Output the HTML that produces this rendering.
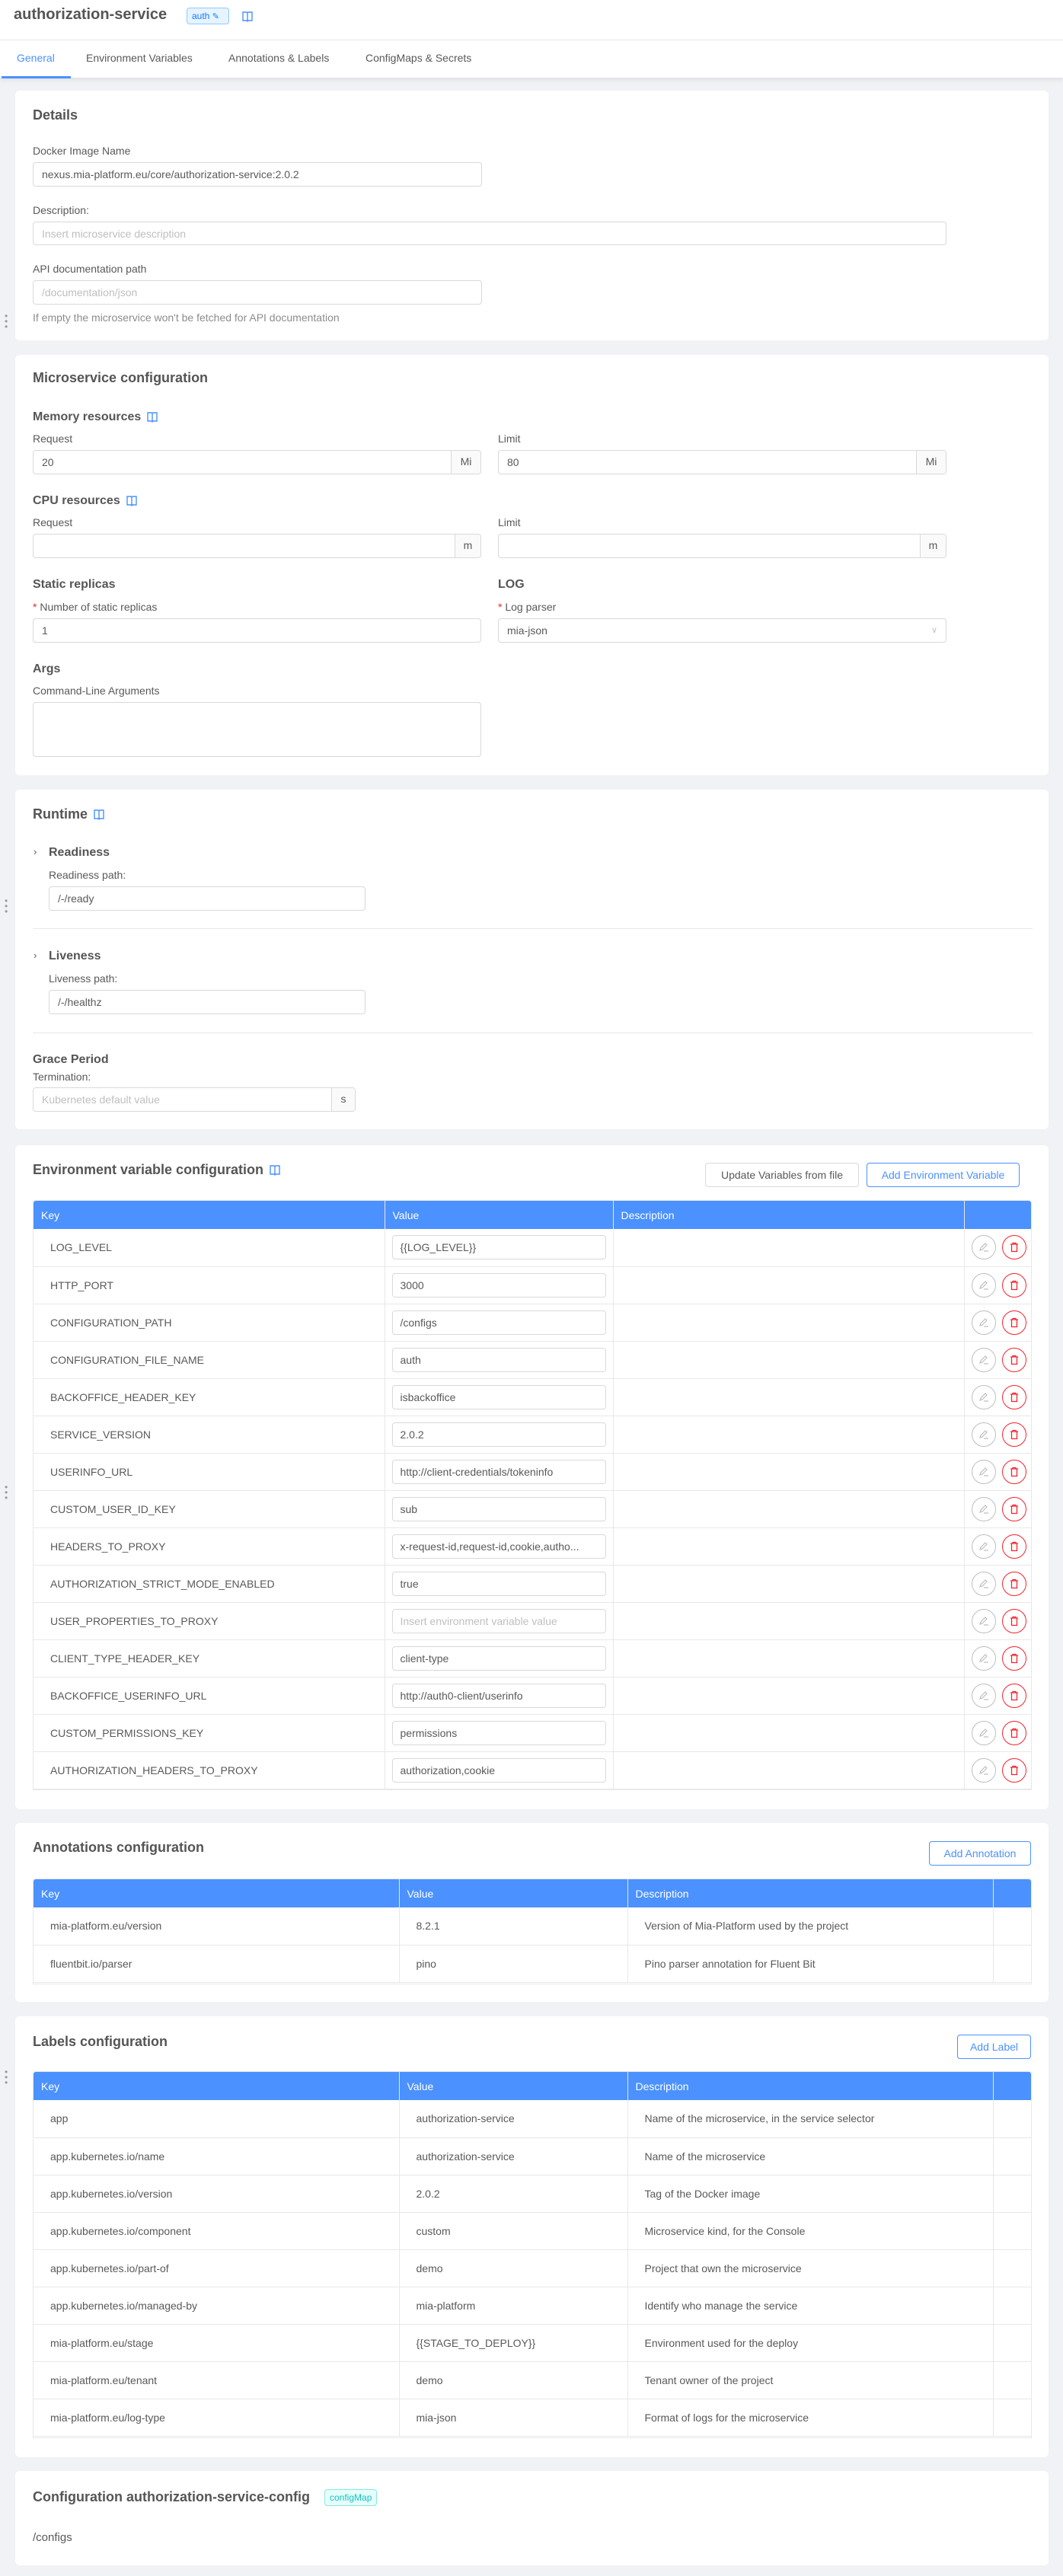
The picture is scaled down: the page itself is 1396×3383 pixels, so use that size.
<!DOCTYPE html>
<html><head><meta charset="utf-8"><style>
*{box-sizing:border-box;margin:0;padding:0}
body{width:1396px;height:3383px;background:#f0f2f5;font-family:"Liberation Sans",sans-serif;color:#595959;font-size:14px;position:relative;overflow:hidden}
.a{position:absolute}
.card{position:absolute;left:20px;width:1357px;background:#fff;border-radius:6px}
.h{position:absolute;font-size:18px;font-weight:bold;color:#555;white-space:nowrap}
.h2{position:absolute;font-size:16px;font-weight:bold;color:#555}
.lbl{position:absolute;font-size:14px;color:#595959;white-space:nowrap}
.inp{position:absolute;height:32px;border:1px solid #d9d9d9;border-radius:4px;background:#fff;padding:0 11px;line-height:30px;font-size:14px;color:#595959;white-space:nowrap;overflow:hidden}
.ph{color:#bfbfbf}
.add{position:absolute;right:0;top:-1px;bottom:-1px;border-left:1px solid #d9d9d9;background:#fafafa;width:34px;text-align:center;line-height:30px;border-radius:0 4px 4px 0}
.btn{position:absolute;height:32px;border:1px solid #d9d9d9;border-radius:4px;background:#fff;line-height:30px;text-align:center;font-size:14px}
.btnp{border-color:#4b91ff;color:#4b91ff}
table{position:absolute;border-collapse:collapse;table-layout:fixed;font-size:14px}
th{background:#4b91ff;color:#fff;font-weight:normal;text-align:left;height:37px;padding:0 10px;border-right:1px solid #e8e8e8}
td{height:49px;border-bottom:1px solid #e8e8e8;border-right:1px solid #e8e8e8;padding:0 22px;white-space:nowrap;color:#595959}
.tbl{border:1px solid #e8e8e8;border-radius:4px 4px 0 0;overflow:hidden}
.star{color:#f5222d}
.drag{position:absolute;left:6px;width:3px;color:#999;font-size:12px;line-height:7px}
.book{display:inline-block;vertical-align:middle;margin-left:8px}
.circ{display:inline-block;width:32px;height:32px;border-radius:50%;border:1px solid #bfbfbf;vertical-align:middle;position:relative}
.circ.r{border-color:#f5222d;margin-left:8px}
.circ svg{position:absolute;left:8px;top:8px}
</style></head><body>

<!-- header -->
<div class="a" style="left:0;top:0;width:1396px;height:53px;background:#fff;border-bottom:1px solid #e8e8e8"></div>
<div class="a" style="left:18px;top:8px;font-size:20px;font-weight:bold;color:#555">authorization-service</div>
<div class="a" style="left:245px;top:10px;width:56px;height:22px;border:1px solid #91caff;background:#e6f4ff;border-radius:4px;color:#1677ff;font-size:12px;line-height:20px;padding-left:6px">auth <span style="font-size:11px">✎</span></div>
<svg class="a" style="left:318px;top:14px" width="14" height="16" viewBox="0 0 14 16"><path d="M1 2h5l1 1 1-1h5v11H8l-1 1-1-1H1z M7 3v11" fill="none" stroke="#4b91ff" stroke-width="1.4"/></svg>
<div class="a" style="left:0;top:53px;width:1396px;height:49px;background:#fff;box-shadow:0 3px 6px rgba(0,0,0,.08)"></div>
<div class="a" style="left:22px;top:68px;font-size:14px;color:#4b91ff">General</div>
<div class="a" style="left:113px;top:68px;font-size:14px">Environment Variables</div>
<div class="a" style="left:300px;top:68px;font-size:14px">Annotations &amp; Labels</div>
<div class="a" style="left:480px;top:68px;font-size:14px">ConfigMaps &amp; Secrets</div>
<div class="a" style="left:2px;top:100px;width:91px;height:3px;background:#4b91ff"></div>

<!-- Details -->
<div class="card" style="top:119px;height:328px"></div>
<div class="h" style="left:43px;top:141px">Details</div>
<div class="lbl" style="left:43px;top:190px">Docker Image Name</div>
<div class="inp" style="left:43px;top:213px;width:590px">nexus.mia-platform.eu/core/authorization-service:2.0.2</div>
<div class="lbl" style="left:43px;top:268px">Description:</div>
<div class="inp" style="left:43px;top:291px;width:1200px;height:31px"><span class="ph">Insert microservice description</span></div>
<div class="lbl" style="left:43px;top:345px">API documentation path</div>
<div class="inp" style="left:43px;top:368px;width:590px"><span class="ph">/documentation/json</span></div>
<div class="lbl" style="left:43px;top:409px;color:#8c8c8c">If empty the microservice won't be fetched for API documentation</div>
<div class="drag" style="top:412px">•<br>•<br>•</div>

<!-- Microservice configuration -->
<div class="card" style="top:466px;height:552px"></div>
<div class="h" style="left:43px;top:486px">Microservice configuration</div>
<div class="h2" style="left:43px;top:539px">Memory resources<svg class="book" width="14" height="16" viewBox="0 0 14 16"><path d="M1 2h5l1 1 1-1h5v11H8l-1 1-1-1H1z M7 3v11" fill="none" stroke="#4b91ff" stroke-width="1.4"/></svg></div>
<div class="lbl" style="left:43px;top:568px">Request</div>
<div class="lbl" style="left:654px;top:568px">Limit</div>
<div class="inp" style="left:43px;top:591px;width:589px">20<div class="add" style="width:39px">Mi</div></div>
<div class="inp" style="left:654px;top:591px;width:589px">80<div class="add" style="width:39px">Mi</div></div>
<div class="h2" style="left:43px;top:649px">CPU resources<svg class="book" width="14" height="16" viewBox="0 0 14 16"><path d="M1 2h5l1 1 1-1h5v11H8l-1 1-1-1H1z M7 3v11" fill="none" stroke="#4b91ff" stroke-width="1.4"/></svg></div>
<div class="lbl" style="left:43px;top:678px">Request</div>
<div class="lbl" style="left:654px;top:678px">Limit</div>
<div class="inp" style="left:43px;top:701px;width:589px"><div class="add">m</div></div>
<div class="inp" style="left:654px;top:701px;width:589px"><div class="add">m</div></div>
<div class="h2" style="left:43px;top:759px">Static replicas</div>
<div class="h2" style="left:654px;top:759px">LOG</div>
<div class="lbl" style="left:43px;top:789px"><span class="star">* </span>Number of static replicas</div>
<div class="lbl" style="left:654px;top:789px"><span class="star">* </span>Log parser</div>
<div class="inp" style="left:43px;top:812px;width:589px">1</div>
<div class="inp" style="left:654px;top:812px;width:589px">mia-json<span style="position:absolute;right:11px;color:#bfbfbf;font-size:11px">∨</span></div>
<div class="h2" style="left:43px;top:870px">Args</div>
<div class="lbl" style="left:43px;top:899px">Command-Line Arguments</div>
<div class="inp" style="left:43px;top:922px;width:589px;height:72px"></div>

<!-- Runtime -->
<div class="card" style="top:1037px;height:446px"></div>
<div class="h" style="left:43px;top:1059px">Runtime<svg class="book" width="14" height="16" viewBox="0 0 14 16"><path d="M1 2h5l1 1 1-1h5v11H8l-1 1-1-1H1z M7 3v11" fill="none" stroke="#4b91ff" stroke-width="1.4"/></svg></div>
<div class="a" style="left:44px;top:1111px;font-size:13px">›</div>
<div class="h2" style="left:64px;top:1111px">Readiness</div>
<div class="lbl" style="left:64px;top:1141px">Readiness path:</div>
<div class="inp" style="left:64px;top:1164px;width:416px">/-/ready</div>
<div class="a" style="left:43px;top:1219px;width:1313px;height:1px;background:#e8e8e8"></div>
<div class="a" style="left:44px;top:1247px;font-size:13px">›</div>
<div class="h2" style="left:64px;top:1247px">Liveness</div>
<div class="lbl" style="left:64px;top:1277px">Liveness path:</div>
<div class="inp" style="left:64px;top:1300px;width:416px">/-/healthz</div>
<div class="a" style="left:43px;top:1356px;width:1313px;height:1px;background:#e8e8e8"></div>
<div class="h2" style="left:43px;top:1383px">Grace Period</div>
<div class="lbl" style="left:43px;top:1406px">Termination:</div>
<div class="inp" style="left:43px;top:1428px;width:424px"><span class="ph">Kubernetes default value</span><div class="add" style="width:31px">s</div></div>
<div class="drag" style="top:1180px">•<br>•<br>•</div>

<!-- Env -->
<div class="card" style="top:1504px;height:872px"></div>
<div class="h" style="left:43px;top:1526px">Environment variable configuration<svg class="book" width="14" height="16" viewBox="0 0 14 16"><path d="M1 2h5l1 1 1-1h5v11H8l-1 1-1-1H1z M7 3v11" fill="none" stroke="#4b91ff" stroke-width="1.4"/></svg></div>
<div class="btn" style="left:926px;top:1527px;width:202px">Update Variables from file</div>
<div class="btn btnp" style="left:1138px;top:1527px;width:201px">Add Environment Variable</div>
<div class="tbl a" style="left:43px;top:1576px;width:1312px;height:775px">
<table style="left:0;top:0;width:1312px">
<colgroup><col style="width:461px"><col style="width:300px"><col style="width:461px"><col style="width:90px"></colgroup>
<tr><th>Key</th><th>Value</th><th>Description</th><th></th></tr>
<tbody id="env"></tbody>
</table></div>
<div class="drag" style="top:1950px">•<br>•<br>•</div>

<!-- Annotations -->
<div class="card" style="top:2394px;height:235px"></div>
<div class="h" style="left:43px;top:2416px">Annotations configuration</div>
<div class="btn btnp" style="left:1220px;top:2418px;width:134px">Add Annotation</div>
<div class="tbl a" style="left:43px;top:2467px;width:1312px;height:139px">
<table style="left:0;top:0;width:1312px">
<colgroup><col style="width:480px"><col style="width:300px"><col style="width:480px"><col style="width:52px"></colgroup>
<tr><th>Key</th><th>Value</th><th>Description</th><th></th></tr>
<tr><td>mia-platform.eu/version</td><td>8.2.1</td><td>Version of Mia-Platform used by the project</td><td></td></tr>
<tr><td>fluentbit.io/parser</td><td>pino</td><td>Pino parser annotation for Fluent Bit</td><td></td></tr>
</table></div>

<!-- Labels -->
<div class="card" style="top:2648px;height:579px"></div>
<div class="h" style="left:43px;top:2671px">Labels configuration</div>
<div class="btn btnp" style="left:1257px;top:2672px;width:97px">Add Label</div>
<div class="tbl a" style="left:43px;top:2720px;width:1312px;height:482px">
<table style="left:0;top:0;width:1312px">
<colgroup><col style="width:480px"><col style="width:300px"><col style="width:480px"><col style="width:52px"></colgroup>
<tr><th>Key</th><th>Value</th><th>Description</th><th></th></tr>
<tr><td>app</td><td>authorization-service</td><td>Name of the microservice, in the service selector</td><td></td></tr>
<tr><td>app.kubernetes.io/name</td><td>authorization-service</td><td>Name of the microservice</td><td></td></tr>
<tr><td>app.kubernetes.io/version</td><td>2.0.2</td><td>Tag of the Docker image</td><td></td></tr>
<tr><td>app.kubernetes.io/component</td><td>custom</td><td>Microservice kind, for the Console</td><td></td></tr>
<tr><td>app.kubernetes.io/part-of</td><td>demo</td><td>Project that own the microservice</td><td></td></tr>
<tr><td>app.kubernetes.io/managed-by</td><td>mia-platform</td><td>Identify who manage the service</td><td></td></tr>
<tr><td>mia-platform.eu/stage</td><td>{{STAGE_TO_DEPLOY}}</td><td>Environment used for the deploy</td><td></td></tr>
<tr><td>mia-platform.eu/tenant</td><td>demo</td><td>Tenant owner of the project</td><td></td></tr>
<tr><td>mia-platform.eu/log-type</td><td>mia-json</td><td>Format of logs for the microservice</td><td></td></tr>
</table></div>
<div class="drag" style="top:2718px">•<br>•<br>•</div>

<!-- Config -->
<div class="card" style="top:3245px;height:124px"></div>
<div class="h" style="left:43px;top:3269px">Configuration authorization-service-config</div>
<div class="a" style="left:426px;top:3269px;height:22px;border:1px solid #87e8de;background:#e6fffb;color:#13c2c2;border-radius:4px;font-size:12px;line-height:20px;padding:0 6px">configMap</div>
<div class="lbl" style="left:43px;top:3324px;font-size:15px">/configs</div>

<script>
var rows=[["LOG_LEVEL","{{LOG_LEVEL}}"],["HTTP_PORT","3000"],["CONFIGURATION_PATH","/configs"],["CONFIGURATION_FILE_NAME","auth"],["BACKOFFICE_HEADER_KEY","isbackoffice"],["SERVICE_VERSION","2.0.2"],["USERINFO_URL","http://client-credentials/tokeninfo"],["CUSTOM_USER_ID_KEY","sub"],["HEADERS_TO_PROXY","x-request-id,request-id,cookie,autho..."],["AUTHORIZATION_STRICT_MODE_ENABLED","true"],["USER_PROPERTIES_TO_PROXY",""],["CLIENT_TYPE_HEADER_KEY","client-type"],["BACKOFFICE_USERINFO_URL","http://auth0-client/userinfo"],["CUSTOM_PERMISSIONS_KEY","permissions"],["AUTHORIZATION_HEADERS_TO_PROXY","authorization,cookie"]];
var pen='<svg width="14" height="14" viewBox="0 0 14 14"><path d="M2 11l1-3 6-6 2 2-6 6zM7 12h6" fill="none" stroke="#bfbfbf" stroke-width="1.2"/></svg>';
var bin='<svg width="14" height="14" viewBox="0 0 14 14"><path d="M2 3h10M5 3V1.5h4V3M3.5 3v9.5h7V3" fill="none" stroke="#f5222d" stroke-width="1.3"/></svg>';
var h='';rows.forEach(function(r){h+='<tr><td>'+r[0]+'</td><td style="padding:0 9px"><div style="height:32px;border:1px solid #d9d9d9;border-radius:4px;padding:0 10px;line-height:30px;overflow:hidden">'+(r[1]?r[1].replace(/</g,"&lt;"):'<span class="ph">Insert environment variable value</span>')+'</div></td><td></td><td style="padding:0 0 0 9px"><span class="circ">'+pen+'</span><span class="circ r">'+bin+'</span></td></tr>';});
document.getElementById('env').innerHTML=h;
</script>
</body></html>
